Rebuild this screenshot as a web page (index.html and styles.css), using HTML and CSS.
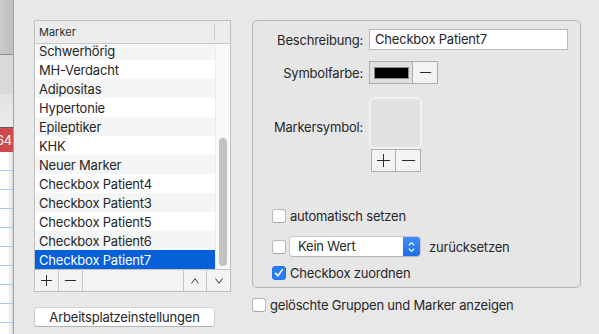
FILE: index.html
```html
<!DOCTYPE html>
<html lang="de">
<head>
<meta charset="utf-8">
<title>Marker</title>
<link rel="stylesheet" href="styles.css">
</head>
<body>
<div class="screen">
  <div class="backwin">
    <div class="bw-top"></div>
    <div class="bw-mid"></div>
    <div class="bw-head"></div>
    <div class="bw-red"><span>64</span></div>
    <div class="bw-row"></div>
    <div class="bw-row"></div>
    <div class="bw-row"></div>
    <div class="bw-row"></div>
    <div class="bw-row"></div>
    <div class="bw-row"></div>
    <div class="bw-row"></div>
    <div class="bw-row"></div>
    <div class="bw-row"></div>
    <div class="bw-row"></div>
  </div>

  <div class="main">
    <div class="leftcol">
      <div class="table">
        <div class="thead">
          <span class="th">Marker</span>
          <span class="th-div"></span>
        </div>
        <div class="tbody">
          <div class="rows">
            <div class="row alt">Schwerhörig</div>
            <div class="row">MH-Verdacht</div>
            <div class="row alt">Adipositas</div>
            <div class="row">Hypertonie</div>
            <div class="row alt">Epileptiker</div>
            <div class="row">KHK</div>
            <div class="row alt">Neuer Marker</div>
            <div class="row">Checkbox Patient4</div>
            <div class="row alt">Checkbox Patient3</div>
            <div class="row">Checkbox Patient5</div>
            <div class="row alt">Checkbox Patient6</div>
            <div class="row selected">Checkbox Patient7</div>
          </div>
          <div class="track"><div class="thumb"></div></div>
        </div>
        <div class="tbar">
          <span class="tb"><svg width="11" height="11" viewBox="0 0 11 11"><path d="M5.5 0v11M0 5.5h11" stroke="#2a2a2a" stroke-width="1" fill="none"/></svg></span>
          <span class="tb"><svg width="11" height="11" viewBox="0 0 11 11"><path d="M0 5.5h11" stroke="#2a2a2a" stroke-width="1" fill="none"/></svg></span>
          <span class="tb-space"></span>
          <span class="tb tb-l"><svg width="8" height="6" viewBox="0 0 8 6"><polyline points="0.5,5.5 4,0.7 7.5,5.5" stroke="#333" stroke-width="1" fill="none"/></svg></span>
          <span class="tb"><svg width="8" height="6" viewBox="0 0 8 6"><polyline points="0.5,0.5 4,5.3 7.5,0.5" stroke="#333" stroke-width="1" fill="none"/></svg></span>
        </div>
      </div>
      <div class="pushbtn">Arbeitsplatzeinstellungen</div>
    </div>

    <div class="rightcol">
      <div class="box">
        <div class="frow r1">
          <span class="lbl">Beschreibung:</span>
          <div class="field">Checkbox Patient7</div>
        </div>
        <div class="frow r2">
          <span class="lbl">Symbolfarbe:</span>
          <div class="colorwell">
            <span class="cw-left"><span class="swatch"></span></span>
            <span class="cw-right"><svg width="11" height="11" viewBox="0 0 11 11"><path d="M0 5.5h11" stroke="#2a2a2a" stroke-width="1" fill="none"/></svg></span>
          </div>
        </div>
        <div class="frow r3">
          <span class="lbl lbl-sym">Markersymbol:</span>
          <div class="symgroup">
            <div class="imagewell"></div>
            <div class="symbtns">
              <span class="sb"><svg width="13" height="13" viewBox="0 0 13 13"><path d="M6.5 0v13M0 6.5h13" stroke="#2a2a2a" stroke-width="1" fill="none"/></svg></span>
              <span class="sb"><svg width="13" height="13" viewBox="0 0 13 13"><path d="M0 6.5h13" stroke="#2a2a2a" stroke-width="1" fill="none"/></svg></span>
            </div>
          </div>
        </div>

        <div class="crow c1"><span class="cb"></span><span>automatisch setzen</span></div>
        <div class="crow c2">
          <span class="cb"></span>
          <div class="popup">
            <span class="popup-text">Kein Wert</span>
            <span class="stepper"><svg width="7" height="12" viewBox="0 0 7 12"><polyline points="0.8,4.3 3.5,1.5 6.2,4.3" stroke="#fff" stroke-width="1.2" fill="none"/><polyline points="0.8,7.7 3.5,10.5 6.2,7.7" stroke="#fff" stroke-width="1.2" fill="none"/></svg></span>
          </div>
          <span class="after-popup">zurücksetzen</span>
        </div>
        <div class="crow c3"><span class="cb checked"><svg width="14" height="14" viewBox="0 0 14 14"><polyline points="3.6,7.4 5.9,9.9 10.4,3.6" stroke="#fff" stroke-width="1.6" fill="none" stroke-linecap="round" stroke-linejoin="round"/></svg></span><span>Checkbox zuordnen</span></div>
      </div>
      <div class="crow outside"><span class="cb"></span><span>gelöschte Gruppen und Marker anzeigen</span></div>
    </div>
  </div>
</div>
</body>
</html>
```

FILE: styles.css
```css
* { box-sizing: border-box; }

html, body {
  margin: 0;
  padding: 0;
}

body {
  width: 599px;
  height: 334px;
  overflow: hidden;
  background: #e8e8e8;
  font-family: Inter, "Noto Sans", "Liberation Sans", sans-serif;
  font-size: 13px;
  letter-spacing: -0.2px;
  color: #262626;
}

.screen {
  display: flex;
  width: 599px;
  height: 334px;
}

/* background window strip */
.backwin {
  width: 14px;
  flex: none;
  height: 334px;
  display: flex;
  flex-direction: column;
  border-right: 1px solid #a4a4a4;
  overflow: hidden;
}
.bw-top {
  height: 55px;
  flex: none;
  background: linear-gradient(to right, #cbcbcb, #bdbdbd);
  border-bottom: 1px solid #8e8e8e;
}
.bw-mid {
  height: 39px;
  flex: none;
  background: #d9d9d9;
}
.bw-head {
  height: 34px;
  flex: none;
  background: linear-gradient(to bottom, #e2e2e2, #ececec);
  border-bottom: 1px solid #5a5a5a;
}
.bw-red {
  height: 24px;
  flex: none;
  background: #cf4a4c;
  color: #fff;
  font-size: 13px;
  line-height: 24px;
  display: flex;
  justify-content: flex-end;
  padding-right: 1px;
  white-space: nowrap;
}
.bw-row {
  height: 19px;
  flex: none;
  background: linear-gradient(to right, #fdfdfd 60%, #dcdcdc);
  border-bottom: 1px solid #a9c6ec;
}

.main {
  display: flex;
  align-items: flex-start;
}

/* left column */
.leftcol {
  margin-left: 20px;
  margin-top: 20px;
  width: 197px;
  display: flex;
  flex-direction: column;
}
.table {
  border: 1px solid #bfbfbf;
  background: #fff;
  display: flex;
  flex-direction: column;
}
.thead {
  height: 23px;
  background: #ececec;
  border-bottom: 1px solid #c9c9c9;
  display: flex;
  align-items: center;
  position: relative;
  padding-left: 4px;
}
.th {
  font-size: 11px;
  letter-spacing: 0;
  color: #2e2e2e;
}
.th-div {
  position: absolute;
  left: 179px;
  top: 3px;
  bottom: 3px;
  width: 1px;
  background: #cfcfcf;
}
.tbody {
  height: 225px;
  display: flex;
  overflow: hidden;
}
.rows {
  flex: 1;
  margin-top: -3px;
  display: flex;
  flex-direction: column;
}
.row {
  height: 19px;
  flex: none;
  line-height: 20px;
  padding-left: 4px;
  background: #fff;
  white-space: nowrap;
}
.row.alt { background: #f4f5f5; }
.row.selected {
  background: #0560d9;
  color: #fff;
}
.track {
  width: 15px;
  flex: none;
  background: #f9f9f9;
  border-left: 1px solid #ececec;
  padding: 94px 2px 2px 3px;
}
.thumb {
  width: 8px;
  height: 128px;
  border-radius: 4px;
  background: #c2c2c2;
}
.tbar {
  height: 22px;
  border-top: 1px solid #c4c4c4;
  background: #f3f3f3;
  display: flex;
}
.tb {
  width: 24px;
  height: 21px;
  flex: none;
  display: flex;
  align-items: center;
  justify-content: center;
  border-right: 1px solid #c4c4c4;
}
.tb:last-child { border-right: none; width: 23px; }
.tb-l { border-left: 1px solid #c4c4c4; }
.tb-space { flex: 1; }

.pushbtn {
  margin-top: 15px;
  width: 181px;
  height: 20px;
  background: #fff;
  border-radius: 4px;
  border: 1px solid #cdcdcd;
  border-top-color: #d4d4d4;
  border-bottom-color: #b3b3b3;
  display: flex;
  align-items: center;
  justify-content: center;
  line-height: 1;
  color: #262626;
}

/* right column */
.rightcol {
  margin-left: 21px;
  margin-top: 20px;
  display: flex;
  flex-direction: column;
}
.box {
  width: 329px;
  height: 268px;
  border: 1px solid #b5b5b5;
  border-radius: 5px;
  background: #e6e6e6;
  display: flex;
  flex-direction: column;
}
.frow {
  display: flex;
  align-items: center;
}
.lbl {
  width: 110px;
  flex: none;
  text-align: right;
  margin-right: 6px;
  white-space: nowrap;
}
.r1 { margin-top: 8px; }
.field {
  width: 199px;
  height: 21px;
  background: #fff;
  border: 1px solid #b9b9b9;
  padding-left: 5px;
  line-height: 19px;
  white-space: nowrap;
}
.r2 { margin-top: 11px; }
.colorwell {
  display: flex;
  height: 23px;
  border: 1px solid #acacac;
}
.cw-left {
  width: 43px;
  background: #e0e0e0;
  border-right: 1px solid #acacac;
  display: flex;
  align-items: center;
  justify-content: center;
}
.swatch {
  width: 35px;
  height: 12px;
  background: #000;
  border: 1px solid #8a8a8a;
}
.cw-right {
  width: 24px;
  background: #f3f3f3;
  display: flex;
  align-items: center;
  justify-content: center;
}
.r3 {
  margin-top: 13px;
  align-items: flex-start;
}
.lbl-sym {
  margin-top: 22px;
  line-height: 16px;
}
.symgroup {
  display: flex;
  flex-direction: column;
}
.imagewell {
  width: 53px;
  height: 52px;
  border-radius: 6px;
  border: 2px solid #f2f2f2;
  background: #e1e1e1;
}
.symbtns {
  display: flex;
  margin-left: 2px;
  border: 1px solid #acacac;
  width: 50px;
  height: 23px;
  background: #f3f3f3;
}
.sb {
  width: 24px;
  display: flex;
  align-items: center;
  justify-content: center;
}
.sb:first-child { border-right: 1px solid #acacac; }

.crow {
  display: flex;
  align-items: center;
  white-space: nowrap;
}
.box .crow { padding-left: 19px; }
.c1 { margin-top: 37px; height: 14px; }
.c2 { margin-top: 13px; height: 21px; }
.c3 { margin-top: 9px; height: 14px; }
.cb {
  width: 14px;
  height: 14px;
  flex: none;
  background: #fff;
  border: 1px solid #b8b8b8;
  border-bottom-color: #a8a8a8;
  border-radius: 3px;
  margin-right: 4px;
}
.cb.checked {
  background: #2a7cf6;
  border-color: #2472ea;
  position: relative;
}
.cb.checked svg {
  position: absolute;
  left: -1px;
  top: -1px;
}
.popup {
  width: 132px;
  height: 21px;
  display: flex;
  background: #fff;
  border: 1px solid #cacaca;
  border-bottom-color: #b5b5b5;
  border-radius: 4px;
  margin-left: -1px;
  overflow: hidden;
}
.popup-text {
  flex: 1;
  padding-left: 8px;
  line-height: 19px;
}
.stepper {
  width: 17px;
  background: linear-gradient(to bottom, #3f8ef8, #1e6ee6);
  display: flex;
  align-items: center;
  justify-content: center;
}
.after-popup { margin-left: 8px; }
.outside {
  margin-top: 10px;
  height: 14px;
}
.outside .cb { margin-right: 4px; }
```
